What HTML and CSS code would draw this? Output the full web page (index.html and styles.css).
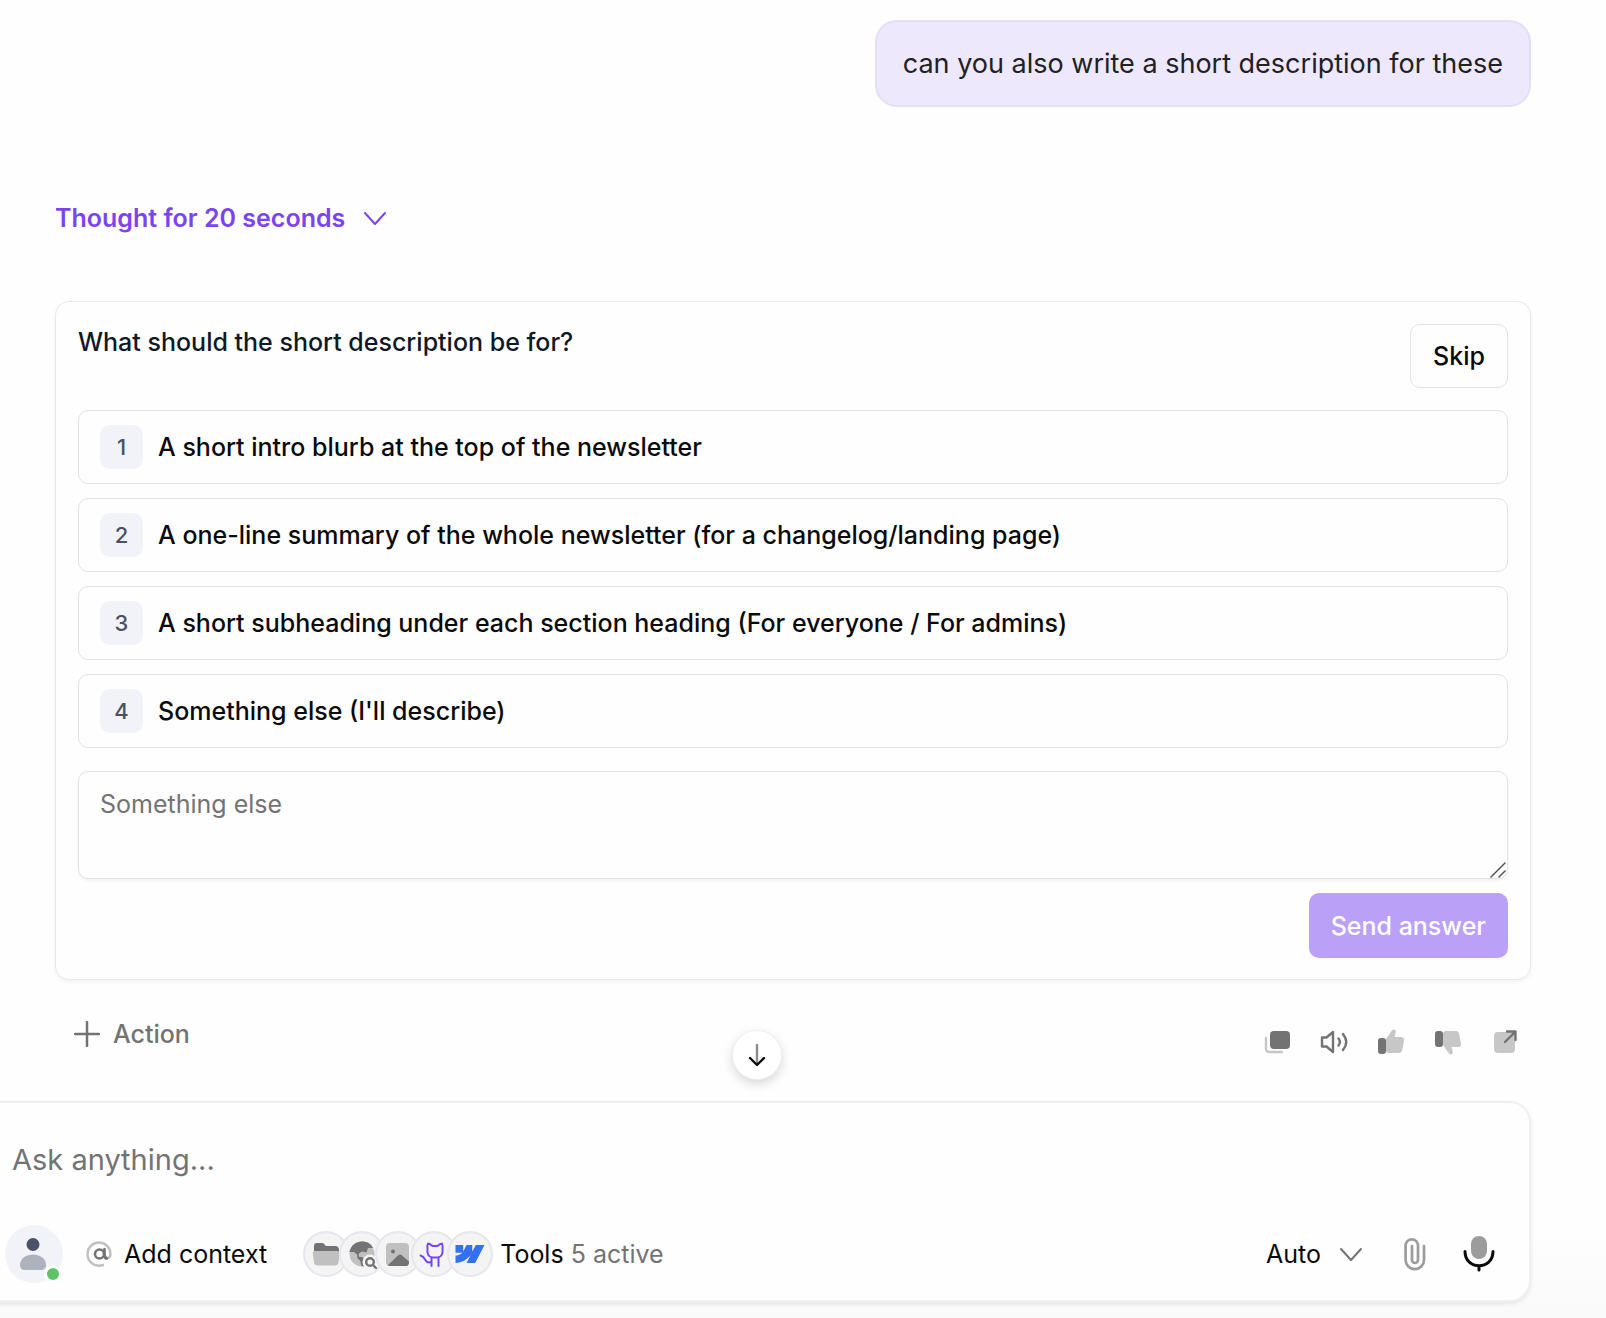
FILE: index.html
```html
<!DOCTYPE html>
<html lang="en">
<head>
<meta charset="utf-8">
<meta name="viewport" content="width=device-width, initial-scale=1">
<title>Chat</title>
<link rel="stylesheet" href="styles.css">
</head>
<body>
<main class="chat">
  <section class="thread">
    <p class="bubble">can you also write a short description for these</p>

    <button class="thought" type="button">
      Thought for 20 seconds
      <svg class="chevron" viewBox="0 0 24 24" aria-hidden="true"><path d="M2 7l10 11L22 7"/></svg>
    </button>

    <form class="card">
      <header class="card-head">
        <h2 class="question"><label for="answer">What should the short description be for?</label></h2>
        <button class="skip" type="button">Skip</button>
      </header>
      <div class="options">
        <button class="option" type="button"><span class="num">1</span>A short intro blurb at the top of the newsletter</button>
        <button class="option" type="button"><span class="num">2</span>A one-line summary of the whole newsletter (for a changelog/landing page)</button>
        <button class="option" type="button"><span class="num">3</span>A short subheading under each section heading (For everyone / For admins)</button>
        <button class="option" type="button"><span class="num">4</span>Something else (I'll describe)</button>
      </div>
      <div class="answer-wrap">
        <textarea class="answer" id="answer" placeholder="Something else"></textarea>
        <svg class="grip" viewBox="0 0 16 16" aria-hidden="true"><path d="M1 15L15 1M9 15l6-6"/></svg>
      </div>
      <button class="send" type="submit">Send answer</button>
    </form>

    <div class="message-bar">
      <button class="action" type="button">
        <svg class="plus" viewBox="0 0 26 26" aria-hidden="true"><path d="M13 1v24M1 13h24"/></svg>
        Action
      </button>
      <div class="feedback">
        <button class="icon-button" type="button" aria-label="Copy">
          <svg viewBox="0 0 28 28"><path class="line-light" d="M3 10v11a3 3 0 0 0 3 3h13"/><rect class="dark" x="7" y="3" width="20" height="18" rx="4"/></svg>
        </button>
        <button class="icon-button" type="button" aria-label="Read aloud">
          <svg viewBox="0 0 28 28"><path class="line-dark" d="M2 9.500h4.500L13 4v20l-6.500-5.500H2zM18.500 10.500q2.800 3.500 0 7M23 6q6.500 8 0 16"/></svg>
        </button>
        <button class="icon-button" type="button" aria-label="Good response">
          <svg viewBox="0 0 28 28"><path class="light" d="M9 11l6-8.500C16.500.500 19.500 2 18.800 4.500L17.500 9H24c2.200 0 3.500 1.500 3 3.500l-2 10c-.5 1.700-1.500 2.500-3 2.500H12c-1.700 0-3-1-3-2.500z"/><rect class="dark" x="1" y="10" width="8" height="16" rx="3"/></svg>
        </button>
        <button class="icon-button" type="button" aria-label="Bad response">
          <svg viewBox="0 0 28 28"><path class="light" d="M9 17l6 8.500c1.500 2 4.500.5 3.800-2L17.500 19H24c2.200 0 3.500-1.500 3-3.500l-2-10C24.500 3.800 23.500 3 22 3H12C10.300 3 9 4 9 5.500z"/><rect class="dark" x="1" y="3" width="8" height="16" rx="3"/></svg>
        </button>
        <button class="icon-button" type="button" aria-label="Open">
          <svg viewBox="0 0 28 28"><rect class="light" x="3" y="4" width="21" height="21" rx="4"/><path class="line-dark" d="M14 14L24.500 3.500M16 3.500h8.500V12"/></svg>
        </button>
      </div>
    </div>
  </section>

  <button class="scroll-down" type="button" aria-label="Scroll to bottom">
    <svg viewBox="0 0 24 24"><path class="stem" d="M12 2v19"/><path class="head" d="M5 15l7 7 7-7"/></svg>
  </button>

  <form class="composer">
    <input class="prompt" type="text" placeholder="Ask anything..." aria-label="Ask anything">
    <div class="toolbar">
      <button class="avatar" type="button" aria-label="Profile">
        <svg viewBox="0 0 58 58"><circle class="av-bg" cx="29" cy="29" r="29"/><circle class="av-head" cx="28" cy="19.500" r="6.500"/><path class="av-body" d="M15 40c0-14 26-14 26 0 0 3.500-2 5-5 5H20c-3 0-5-1.500-5-5z"/><circle class="av-ring" cx="48" cy="49" r="9"/><circle class="av-dot" cx="48" cy="49" r="6"/></svg>
      </button>
      <button class="context" type="button">
        <svg viewBox="0 0 26 26" aria-hidden="true"><path class="at-ring" d="M17 24C8 27 1.500 20 1.500 13a11.500 11.500 0 0 1 23 0c0 5-5.500 5-5.500 1"/><circle class="at-a" cx="13.500" cy="13" r="4.500"/><path class="at-a" d="M18.500 8v6.500q.3 3 2.500 3"/></svg>
        Add context
      </button>
      <button class="tools" type="button">
        <span class="stack">
          <svg class="tool" viewBox="0 0 46 46" aria-hidden="true"><path class="dark" d="M11 20v-5a3 3 0 0 1 3-3h5q2 0 3 2l1 1h9a4 4 0 0 1 4 4v2z"/><path class="glyph-light" d="M11 20h24q2 0 1.700 2.500l-1.200 9q-.5 3-3.500 3H14.500q-3 0-3.500-3l-1.200-9Q9.500 20 11 20z"/></svg>
          <svg class="tool" viewBox="0 0 46 46" aria-hidden="true"><circle class="glyph-light" cx="23" cy="23" r="12.500"/><path class="dark" d="M10.500 21C12 14 17 10.500 23 10.500c5 0 9 2 11 6.500l-5 0-1.500 4.500-4.500-1-3 2-.5 3 4.500 1 2.500 4-1 5-3-.5-1.500-5.500-2.500-2-.5-4-3-2.500z"/><circle class="disc" cx="31" cy="31" r="7.500"/><path class="line-dark" d="M34 34l3 3"/><circle class="line-dark" cx="31" cy="31" r="3.800"/></svg>
          <svg class="tool" viewBox="0 0 46 46" aria-hidden="true"><rect class="glyph-light" x="11" y="12" width="23" height="23" rx="4"/><path class="dark" d="M13 34L23 24.500q2-2 4 0l7 6V32q-.5 3-3 3H14z"/><circle class="dark" cx="18" cy="20.500" r="2"/></svg>
          <svg class="tool" viewBox="0 0 46 46" aria-hidden="true"><path class="cat" d="M17 12.500q2.500.3 4.500 2.500h5q2-2.200 4.500-2.500 1 2.500.5 4.500 1 9-5 9.500h-5q-6-.5-5-9.500-.5-2 .5-4.500zM20.500 35v-8M27.500 35v-8M20.500 31c-8 2-4.500-5-11-6.500"/></svg>
          <svg class="tool" viewBox="0 0 46 46" aria-hidden="true"><path class="webflow" d="M37.500 14l-9.300 18h-8.700l3.900-7.500h-.2C20 28.700 15.200 31.500 8.500 32v-7.400s4.300-.3 6.900-2.900H8.500V14h7.700v6.300h.2l3.100-6.300h5.800v6.300h.2l3.300-6.300z"/></svg>
        </span>
        <span>Tools <span class="count">5 active</span></span>
      </button>
      <button class="mode" type="button">
        Auto
        <svg class="chevron" viewBox="0 0 24 24" aria-hidden="true"><path d="M2 7l10 11L22 7"/></svg>
      </button>
      <button class="attach" type="button" aria-label="Attach file">
        <svg viewBox="0 0 24 34"><path d="M21 9v14a9.200 9.200 0 0 1-18.400 0V8.500a6.200 6.200 0 0 1 12.400 0V23a3 3 0 0 1-6 0V9"/></svg>
      </button>
      <button class="mic" type="button" aria-label="Dictate">
        <svg viewBox="0 0 32 36"><rect class="mic-body" x="8" y="0" width="16" height="23" rx="8"/><path class="mic-stand" d="M2 15.500c0 19 28 19 28 0M16 30v4"/></svg>
      </button>
    </div>
  </form>
</main>
</body>
</html>
```
FILE: styles.css
```css
* { box-sizing: border-box; }

body {
  margin: 0;
  min-height: 100vh;
  background: #fefefe;
  font-family: Inter, "Liberation Sans", sans-serif;
  font-size: 25px;
  color: #0a0a0a;
  overflow-x: hidden;
}

button, input, textarea {
  margin: 0;
  padding: 0;
  border: 0;
  background: none;
  font: inherit;
  color: inherit;
}

svg { display: block; fill: none; stroke-linecap: round; stroke-linejoin: round; flex: none; }

.chat {
  position: relative;
  min-height: 100vh;
  padding: 20px 75px 14px 0;
  background: linear-gradient(#fefefe 93%, #fafafa);
}

.thread {
  display: flex;
  flex-direction: column;
  align-items: flex-start;
  padding-left: 55px;
}

.bubble {
  align-self: flex-end;
  margin: 0;
  padding: 24px 26px;
  border: 2px solid #e4dff5;
  border-radius: 22px;
  background: #eee8fd;
  color: #212124;
  font-size: 27px;
  line-height: 35px;
}

.thought {
  display: flex;
  align-items: center;
  gap: 18px;
  margin-top: 92px;
  color: #7a45f0;
  font-weight: 600;
  line-height: 38px;
}

.chevron { width: 24px; height: 24px; stroke: currentColor; stroke-width: 2; }

.card {
  display: flex;
  flex-direction: column;
  align-self: stretch;
  margin-top: 64px;
  padding: 22px 22px 21px;
  border: 1px solid #e8e8ea;
  border-radius: 14px;
  background: #fefefe;
  box-shadow: 0 2px 4px rgba(0, 0, 0, 0.05);
}

.card-head { display: flex; justify-content: space-between; align-items: flex-start; }

.question { margin: 0; color: #101828; font-size: 25px; font-weight: 500; line-height: 36px; }

.skip {
  height: 64px;
  padding: 0 22px;
  border: 1px solid #e2e2e4;
  border-radius: 10px;
  font-weight: 500;
}

.options { display: grid; gap: 14px; margin-top: 22px; }

.option {
  display: flex;
  align-items: center;
  gap: 15px;
  min-height: 74px;
  padding: 14px 21px;
  border: 1px solid #e2e2e4;
  border-radius: 10px;
  font-weight: 500;
  text-align: left;
}

.num {
  display: grid;
  place-items: center;
  width: 43px;
  height: 44px;
  border-radius: 10px;
  background: #f2f3f8;
  color: #4a5065;
  font-size: 22px;
}

.answer-wrap { position: relative; display: grid; margin-top: 23px; }

.answer {
  height: 108px;
  padding: 14px 21px;
  border: 1px solid #e2e2e4;
  border-radius: 10px;
  box-shadow: 0 2px 3px rgba(0, 0, 0, 0.05);
  line-height: 36px;
  resize: none;
}

.answer::placeholder, .prompt::placeholder { color: #737373; opacity: 1; }

.grip {
  position: absolute;
  right: 2px;
  bottom: 1px;
  width: 16px;
  height: 16px;
  stroke: #555;
  stroke-width: 1.5;
}

.send {
  align-self: flex-end;
  height: 65px;
  margin-top: 14px;
  padding: 0 22px;
  border-radius: 10px;
  background: #baa1f7;
  color: #fff;
  font-weight: 500;
}

.message-bar {
  display: flex;
  justify-content: space-between;
  align-self: stretch;
  padding: 36px 12px 0 19px;
}

.action { display: flex; align-items: center; gap: 13px; height: 36px; color: #737373; font-weight: 500; }
.plus { width: 26px; height: 26px; stroke: currentColor; stroke-width: 2.5; }

.feedback { display: flex; gap: 29px; padding-top: 12px; }
.icon-button svg { width: 28px; height: 28px; }

.dark { fill: #737373; }
.light { fill: #c7c7c7; }
.glyph-light { fill: #c0c0c0; }
.line-dark { stroke: #737373; stroke-width: 2.4; }
.line-light { stroke: #c7c7c7; stroke-width: 2.4; }

.scroll-down {
  position: absolute;
  left: 733px;
  bottom: 239px;
  display: grid;
  place-items: center;
  width: 48px;
  height: 48px;
  border-radius: 50%;
  background: #fff;
  box-shadow: 0 0 0 1px #f0f0f0, 0 4px 12px rgba(0, 0, 0, 0.18);
}
.scroll-down svg { width: 24px; height: 24px; stroke-width: 2.4; }
.stem { stroke: #8c8c8c; }
.head { stroke: #0a0a0a; }

.composer {
  margin: 45px 0 0 -24px;
  padding: 34px 34px 17px 27px;
  border: 2px solid #f0f0f0;
  border-radius: 22px;
  background: #fefefe;
  box-shadow: 0 2px 5px rgba(0, 0, 0, 0.09);
}

.prompt { display: block; width: 100%; height: 44px; padding-left: 7px; font-size: 29px; outline: none; }

.toolbar { display: flex; align-items: center; margin-top: 44px; }

.avatar svg { width: 58px; height: 58px; overflow: visible; }
.av-bg { fill: #f2f3f8; }
.av-head { fill: #4a5268; }
.av-body { fill: #adb2bd; }
.av-ring { fill: #fff; }
.av-dot { fill: #5fc26b; }

.context { display: flex; align-items: center; gap: 12px; margin-left: 23px; }
.context svg { width: 26px; height: 26px; }
.at-ring { stroke: #c0c0c0; stroke-width: 2.4; }
.at-a { stroke: #737373; stroke-width: 2.6; }

.tools { display: flex; align-items: center; gap: 7px; margin-left: 36px; }
.count { color: #737373; }
.stack { display: flex; }
.tool {
  width: 46px;
  height: 46px;
  border-radius: 50%;
  background: #f4f4f5;
  box-shadow: inset 0 0 0 2px #e6e6ec;
}
.tool + .tool { margin-left: -10px; }
.disc { fill: #f4f4f5; }
.cat { stroke: #7a45f0; stroke-width: 2; }
.webflow { fill: #3370f2; }

.mode { display: flex; align-items: center; gap: 18px; margin-left: auto; }
.mode .chevron { stroke: #737373; }

.attach { margin-left: 40px; }
.attach svg { width: 24px; height: 34px; stroke: #9c9c9c; stroke-width: 2.7; }
.mic { margin-left: 36px; }
.mic svg { width: 32px; height: 36px; }
.mic-body { fill: #9c9c9c; }
.mic-stand { stroke: #0a0a0a; stroke-width: 3; }
```
